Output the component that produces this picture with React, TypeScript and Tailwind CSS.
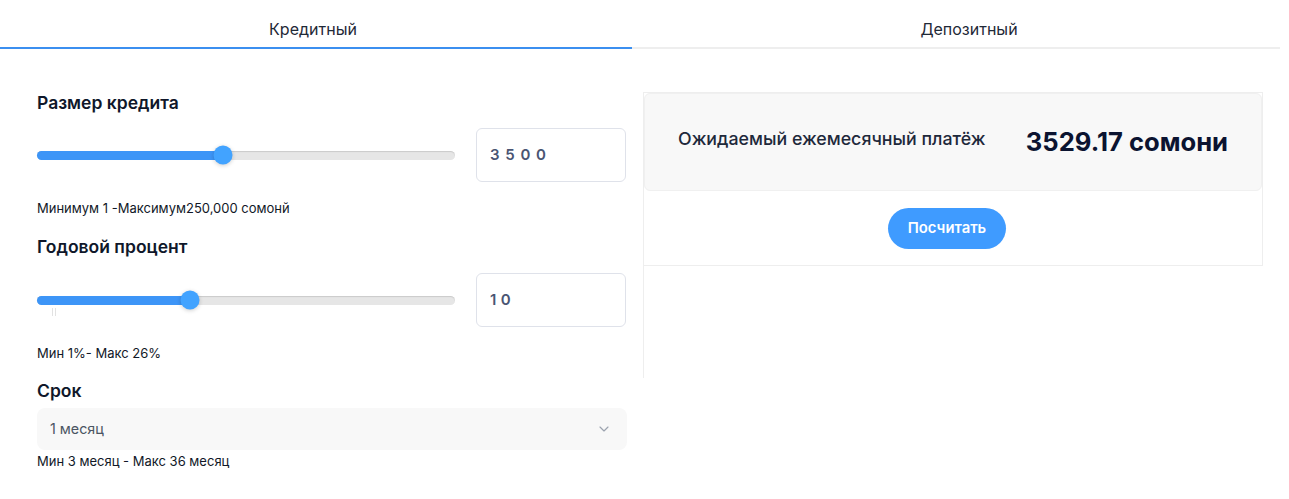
import React, { useState } from 'react';
import { ChevronDown } from 'lucide-react';

type SliderProps = { percent: number; ticks?: boolean };

function Slider({ percent, ticks }: SliderProps) {
  return (
    <div className="relative flex-1 h-[18px] flex items-center">
      <div className="relative w-full h-[9px] rounded-full bg-[#e6e6e6] shadow-[inset_0_1px_1px_rgba(0,0,0,0.12)]">
        <div className="h-full rounded-full bg-[#3d95f7]" style={{ width: `${percent}%` }} />
        <div
          className="absolute top-1/2 size-[19px] -translate-x-1/2 -translate-y-1/2 rounded-full bg-[#42a3ff] shadow-[0_1px_4px_rgba(0,0,0,0.2)]"
          style={{ left: `${percent}%` }}
        />
      </div>
      {ticks && (
        <div className="absolute left-[15px] top-[17px] flex gap-[2px]">
          <span className="w-px h-[8px] bg-[#e2e2e2]" />
          <span className="w-px h-[8px] bg-[#e2e2e2]" />
        </div>
      )}
    </div>
  );
}

export default function App() {
  const [tab, setTab] = useState(0);

  return (
    <div className="w-[1280px] bg-white text-[#111827] font-['Inter',_'Noto_Sans',sans-serif]">
      {/* Tabs */}
      <div className="flex">
        <button
          onClick={() => setTab(0)}
          className={`w-[632px] h-[49px] pt-[11px] pr-[6px] text-[16px] leading-[20px] text-[#1f2937] border-b-2 ${tab === 0 ? 'border-[#3b8ff0]' : 'border-[#eeeeee]'}`}
        >
          Кредитный
        </button>
        <button
          onClick={() => setTab(1)}
          className={`flex-1 h-[49px] pt-[11px] pl-[26px] text-[16px] leading-[20px] text-[#1f2937] border-b-2 ${tab === 1 ? 'border-[#3b8ff0]' : 'border-[#eeeeee]'}`}
        >
          Депозитный
        </button>
      </div>

      <div className="flex">
        {/* Left: form */}
        <div className="w-[632px] pl-[37px] pr-[6px] pt-[43px]">
          <h3 className="text-[17.5px] font-semibold leading-[22px] text-[#0f172a]">Размер кредита</h3>
          <div className="flex items-center gap-[21px] mt-[14px]">
            <Slider percent={44.5} />
            <div className="w-[150px] h-[54px] rounded-md border border-[#dfe2ea] flex items-center px-[13px] text-[15px] font-semibold tracking-[0.38em] text-[#4a5573]">
              3500
            </div>
          </div>
          <p className="mt-[18px] text-[13px] leading-[16px] text-[#111827]">Минимум 1 -Максимум250,000 сомонй</p>

          <h3 className="mt-[20px] text-[17.5px] font-semibold leading-[22px] text-[#0f172a]">Годовой процент</h3>
          <div className="flex items-center gap-[21px] mt-[15px]">
            <Slider percent={36.6} ticks />
            <div className="w-[150px] h-[54px] rounded-md border border-[#dfe2ea] flex items-center px-[13px] text-[15px] font-semibold tracking-[0.3em] text-[#4a5573]">
              10
            </div>
          </div>
          <p className="mt-[18px] text-[13px] leading-[16px] text-[#111827]">Мин 1%- Макс 26%</p>

          <h3 className="mt-[19px] text-[17.5px] font-semibold leading-[22px] text-[#0f172a]">Срок</h3>
          <div className="mt-[6px] h-[42px] w-[590px] rounded-lg bg-[#f8f8f8] flex items-center justify-between pl-[13px] pr-[15px]">
            <span className="text-[14.3px] text-[#4b5563]">1 месяц</span>
            <ChevronDown className="w-4 h-4 text-[#9ca3af]" strokeWidth={1.75} />
          </div>
          <p className="mt-[3px] text-[13px] leading-[16px] text-[#111827]">Мин 3 месяц - Макс 36 месяц</p>
        </div>

        {/* Right: result */}
        <div className="pl-[11px] pt-[43px]">
          <div className="w-[620px] h-[286px] border-l border-[#eeeeee]">
            <div className="h-[174px] border-t border-r border-b border-[#eeeeee]">
              <div className="h-[98px] rounded-md bg-[#f8f8f8] border border-[#f0f0f0] flex items-center justify-between pl-[33px] pr-[33px]">
                <span className="text-[17.8px] font-medium text-[#1e293b] -mt-[6px]">Ожидаемый ежемесячный платёж</span>
                <span className="text-[25.6px] font-bold text-[#0b1330]">3529.17 сомони</span>
              </div>
              <div className="flex justify-center pt-[17px] pr-[12px]">
                <button className="w-[118px] h-[41px] rounded-full bg-[#3f9bff] text-white text-[14.8px] font-semibold">
                  Посчитать
                </button>
              </div>
            </div>
          </div>
        </div>
      </div>
    </div>
  );
}
